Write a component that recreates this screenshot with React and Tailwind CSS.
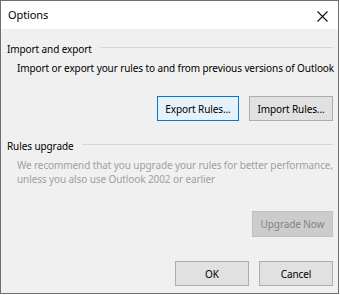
import React from "react";

const font = { fontFamily: '"Noto Sans", "Open Sans", sans-serif' };

const GroupHeader = ({ title }) => (
	<div className="flex items-center h-[14px]">
		<span className="text-[#000] whitespace-nowrap">{title}</span>
		<div className="flex-1 h-px bg-[#d6d6d6] ml-[8px] -mt-[4px]"></div>
	</div>
);

const Button = ({ children, className = "", variant }) => {
	let look = "bg-[#e1e1e1] border-[#adadad] text-black";
	if (variant === "focus") look = "bg-[#e5f1fb] border-[#0078d7] text-black";
	if (variant === "disabled") look = "bg-[#cccccc] border-[#bfbfbf] text-[#838383]";
	return (
		<button className={`border flex items-center justify-center whitespace-nowrap ${look} ${className}`}>
			{children}
		</button>
	);
};

export default function App() {
	return (
		<div className="w-[340px] h-[295px] bg-white" style={font}>
			<div className="w-[339px] h-[294px] border border-[#6f6f6f] flex flex-col text-[10px] tracking-[-0.1px] leading-[14px]">
				{/* title bar */}
				<div className="h-[28px] bg-white flex items-center justify-between pl-[7px] pr-[10px]">
					<span className="text-[11px] text-black">Options</span>
					<svg width="11" height="11" viewBox="0 0 11 11" className="mt-[2px]">
						<path d="M0.5 0.5 L10.5 10.5 M10.5 0.5 L0.5 10.5" stroke="#111" strokeWidth="1.1" />
					</svg>
				</div>

				{/* body */}
				<div className="flex-1 bg-[#f0f0f0] pl-[6px] pr-[5px] pt-[13px]">
					<GroupHeader title="Import and export" />
					<p className="mt-[5px] ml-[10px] whitespace-nowrap text-black">
						Import or export your rules to and from previous versions of Outlook
					</p>
					<div className="flex justify-end gap-[10px] mt-[21px]">
						<Button variant="focus" className="w-[82px] h-[25px]">Export Rules...</Button>
						<Button className="w-[84px] h-[25px]">Import Rules...</Button>
					</div>

					<div className="mt-[18px]">
						<GroupHeader title="Rules upgrade" />
					</div>
					<p className="mt-[5px] ml-[10px] text-[#a0a0a0] whitespace-nowrap">
						We recommend that you upgrade your rules for better performance,
						<br />
						unless you also use Outlook 2002 or earlier
					</p>
					<div className="flex justify-end mt-[25px]">
						<Button variant="disabled" className="w-[81px] h-[26px]">Upgrade Now</Button>
					</div>

					<div className="flex justify-end gap-[10px] mt-[24px]">
						<Button className="w-[74px] h-[25px]">OK</Button>
						<Button className="w-[74px] h-[25px]">Cancel</Button>
					</div>
				</div>
			</div>
		</div>
	);
}
